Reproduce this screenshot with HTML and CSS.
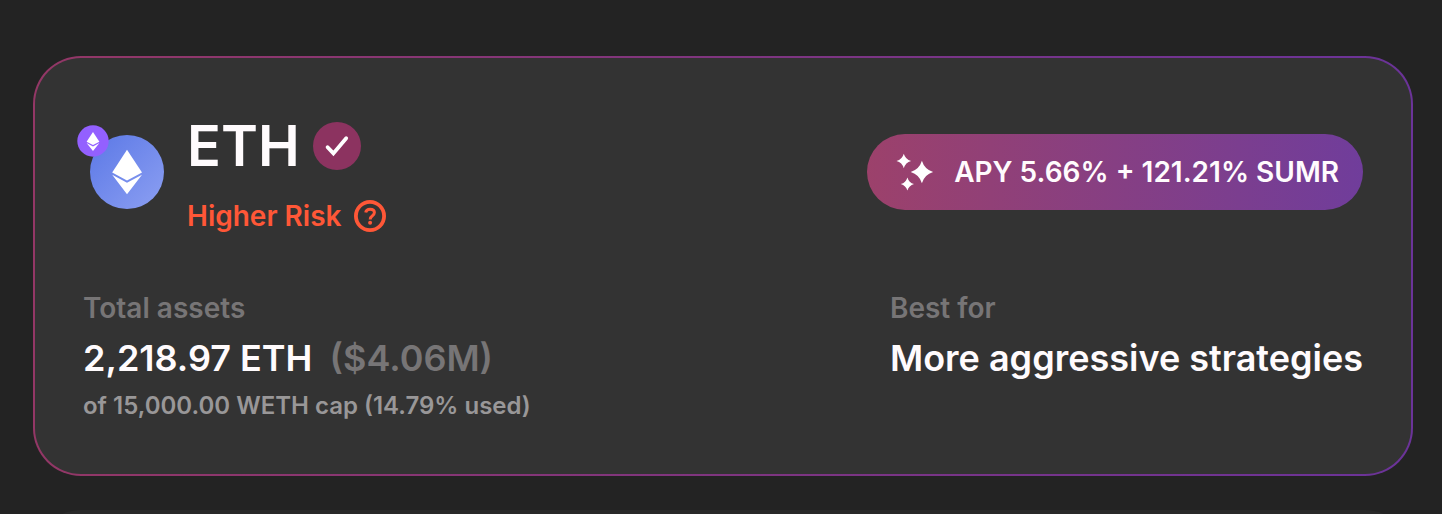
FILE: index.html
```html
<!DOCTYPE html>
<html lang="en">
<head>
	<meta charset="UTF-8">
	<title>ETH vault</title>
	<link rel="stylesheet" href="styles.css">
</head>
<body>
	<main class="vaults">
		<article class="card active">
			<div class="card-header">
				<div class="vault">
					<div class="token">
						<svg class="token-icon" viewBox="0 0 74 74" aria-hidden="true">
							<defs>
								<linearGradient id="ethBlue" x1="0" y1="0" x2="1" y2="1">
									<stop offset="0" stop-color="#5b78e6"/>
									<stop offset="1" stop-color="#8c9ff2"/>
								</linearGradient>
							</defs>
							<circle cx="37" cy="37" r="37" fill="url(#ethBlue)"/>
							<path fill="#fff" d="M37 14.8L52 37.6L37 45.4L22.2 37.6Z"/>
							<path fill="#fff" d="M22.2 39.8L37 47.8L52 39.8L37 59.2Z"/>
						</svg>
						<svg class="network-icon" viewBox="0 0 32 32" aria-hidden="true">
							<circle cx="16" cy="16" r="15.7" fill="#9360ff"/>
							<path fill="#fff" d="M16 7L22.4 16.8L16 20.1L9.6 16.8Z"/>
							<path fill="#fff" d="M9.6 18L16 21.4L22.4 18L16 26Z"/>
						</svg>
					</div>
					<div class="vault-info">
						<div class="vault-name">
							<h2>ETH</h2>
							<svg class="check" viewBox="0 0 48 48" aria-hidden="true">
								<circle cx="24" cy="24" r="24" fill="#8c3360"/>
								<path d="M14.6 25.2L20.4 31.4L33.2 16.2" fill="none" stroke="#fff" stroke-width="3.8" stroke-linecap="round"/>
							</svg>
						</div>
						<div class="risk">
							<span>Higher Risk</span>
							<svg class="help" viewBox="0 0 32 32" fill="none" stroke="#ff5737" aria-hidden="true">
								<circle cx="16" cy="16" r="14.1" stroke-width="3.8"/>
								<path d="M11.7 12.6C12.1 10.3 13.8 9.2 16.1 9.2C18.6 9.2 20.4 10.5 20.4 12.6C20.4 14.3 19.4 15.1 18.2 15.9C16.8 16.8 16.2 17.4 16.2 19.4" stroke-width="3"/>
								<circle cx="16.1" cy="22.7" r="2" fill="#ff5737" stroke="none"/>
							</svg>
						</div>
					</div>
				</div>
				<div class="apy">
					<svg class="stars" viewBox="0 0 38 38" fill="#fff" aria-hidden="true">
						<path d="M25.9 7.8Q28.5 16.4 37.1 19Q28.5 21.6 25.9 30.2Q23.3 21.6 14.7 19Q23.3 16.4 25.9 7.8Z"/>
						<path d="M7.8 .7Q9.4 6.4 15.1 8Q9.4 9.6 7.8 15.3Q6.2 9.6 .5 8Q6.2 6.4 7.8 .7Z"/>
						<path d="M11.4 24.4Q12.9 29.5 18 31Q12.9 32.5 11.4 37.6Q9.9 32.5 4.8 31Q9.9 29.5 11.4 24.4Z"/>
					</svg>
					<span>APY 5.66% + 121.21% SUMR</span>
				</div>
			</div>
			<div class="card-details">
				<div class="detail">
					<p class="label">Total assets</p>
					<p class="value">2,218.97 ETH <span class="usd">($4.06M)</span></p>
					<p class="cap">of 15,000.00 WETH cap (14.79% used)</p>
				</div>
				<div class="detail">
					<p class="label">Best for</p>
					<p class="value">More aggressive strategies</p>
				</div>
			</div>
		</article>
		<article class="card next"></article>
	</main>
</body>
</html>
```

FILE: styles.css
```css
*{
	margin: 0;
	padding: 0;
	box-sizing: border-box;
}
body{
	background: #232323;
	color: #fffbfd;
	font-family: Inter, "Liberation Sans", sans-serif;
	font-weight: 600;
}
svg{
	display: block;
	flex: none;
}
.vaults{
	display: flex;
	flex-direction: column;
	gap: 34px;
	height: 100vh;
	padding: 56px 29px 0 33px;
	overflow: hidden;
}
.card{
	flex: none;
	border: 2px solid transparent;
	border-radius: 48px;
	padding: 54px 48px 50px;
}
/* gradient border: fill under the padding box, gradient under the border box */
.active{
	background:
		linear-gradient(#333, #333) padding-box,
		linear-gradient(90deg, #933766, #6b3399) border-box;
}
.next{
	background: #292929 border-box;
}
.card-header, .card-details{
	display: flex;
	justify-content: space-between;
}
.card-header{
	align-items: center;
	margin-bottom: 56px;
}
.vault{
	display: flex;
	align-items: center;
	gap: 23px;
}
.token{
	position: relative;
	padding-left: 7px;
}
.token-icon{
	width: 74px;
	height: 74px;
}
.network-icon{
	position: absolute;
	top: -10px;
	left: -6px;
	width: 32px;
	height: 32px;
}
.vault-info{
	display: flex;
	flex-direction: column;
	gap: 20px;
}
.vault-name{
	display: flex;
	align-items: center;
	gap: 13px;
}
.vault-name h2{
	font-size: 56px;
	line-height: 68px;
	font-weight: 600;
}
.check{
	width: 48px;
	height: 48px;
}
.risk{
	display: flex;
	align-items: center;
	gap: 12px;
	font-size: 28px;
	line-height: 32px;
	color: #ff5737;
}
.help{
	width: 32px;
	height: 32px;
}
.apy{
	display: flex;
	align-items: center;
	gap: 20px;
	height: 76px;
	padding: 0 24px 0 29px;
	border-radius: 38px;
	background: linear-gradient(90deg, #9c416b, #703d9b);
	font-size: 28px;
	white-space: nowrap;
}
.stars{
	width: 38px;
	height: 38px;
}
.detail{
	display: flex;
	flex-direction: column;
	gap: 6px;
}
.label{
	font-size: 28px;
	line-height: 40px;
	color: #777576;
}
.value{
	font-size: 36px;
	line-height: 48px;
}
.usd{
	margin-left: 8px;
	color: #777576;
}
.cap{
	font-size: 24px;
	line-height: 36px;
	color: #999798;
}
```
